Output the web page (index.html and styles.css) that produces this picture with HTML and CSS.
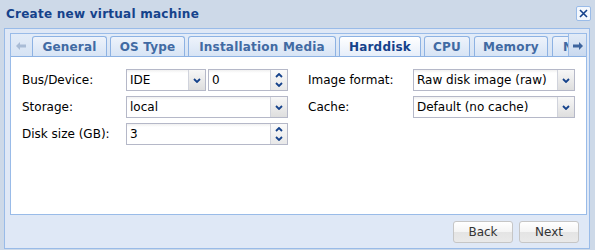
FILE: index.html
```html
<!DOCTYPE html>
<html>
<head>
<meta charset="utf-8">
<link rel="stylesheet" href="styles.css">
</head>
<body>
<div class="win">
  <div class="win-head">
    <span class="win-title">Create new virtual machine</span>
    <span class="win-close"><svg width="9" height="9" viewBox="0 0 9 9"><path d="M1 1L8 8M8 1L1 8" stroke="#15428b" stroke-width="1.6"/></svg></span>
  </div>
  <div class="win-body">
    <div class="tabpanel">
      <div class="tabstrip">
        <span class="scroller scroller-left"><svg width="10" height="8" viewBox="0 0 10 8"><path d="M0 4L4 0V2.5H10V5.5H4V8Z" fill="#a9bcd6"/></svg></span>
        <div class="tabs">
          <span class="tab t-general">General</span>
          <span class="tab t-os">OS Type</span>
          <span class="tab t-media">Installation Media</span>
          <span class="tab t-disk tab-active">Harddisk</span>
          <span class="tab t-cpu">CPU</span>
          <span class="tab t-mem">Memory</span>
          <span class="tab t-net">Network</span>
        </div>
        <span class="scroller scroller-right"><svg width="10" height="8" viewBox="0 0 10 8"><path d="M10 4L6 0V2.5H0V5.5H6V8Z" fill="#3d649e"/></svg></span>
      </div>
      <div class="tabbody">
        <div class="col">
          <div class="row">
            <span class="lbl">Bus/Device:</span>
            <div class="pair">
              <div class="field combo small"><span class="val">IDE</span><span class="trig"><svg width="8" height="5" viewBox="0 0 8 5"><path d="M1 1L4 4L7 1" stroke="#15428b" stroke-width="1.8" fill="none"/></svg></span></div>
              <div class="field spin small"><span class="val">0</span><span class="trig spintrig"><svg width="8" height="5" viewBox="0 0 8 5"><path d="M1 4L4 1L7 4" stroke="#15428b" stroke-width="1.8" fill="none"/></svg><svg width="8" height="5" viewBox="0 0 8 5"><path d="M1 1L4 4L7 1" stroke="#15428b" stroke-width="1.8" fill="none"/></svg></span></div>
            </div>
          </div>
          <div class="row">
            <span class="lbl">Storage:</span>
            <div class="field combo"><span class="val">local</span><span class="trig"><svg width="8" height="5" viewBox="0 0 8 5"><path d="M1 1L4 4L7 1" stroke="#15428b" stroke-width="1.8" fill="none"/></svg></span></div>
          </div>
          <div class="row">
            <span class="lbl">Disk size (GB):</span>
            <div class="field spin"><span class="val">3</span><span class="trig spintrig"><svg width="8" height="5" viewBox="0 0 8 5"><path d="M1 4L4 1L7 4" stroke="#15428b" stroke-width="1.8" fill="none"/></svg><svg width="8" height="5" viewBox="0 0 8 5"><path d="M1 1L4 4L7 1" stroke="#15428b" stroke-width="1.8" fill="none"/></svg></span></div>
          </div>
        </div>
        <div class="col col-right">
          <div class="row">
            <span class="lbl">Image format:</span>
            <div class="field combo"><span class="val">Raw disk image (raw)</span><span class="trig"><svg width="8" height="5" viewBox="0 0 8 5"><path d="M1 1L4 4L7 1" stroke="#15428b" stroke-width="1.8" fill="none"/></svg></span></div>
          </div>
          <div class="row">
            <span class="lbl">Cache:</span>
            <div class="field combo"><span class="val">Default (no cache)</span><span class="trig"><svg width="8" height="5" viewBox="0 0 8 5"><path d="M1 1L4 4L7 1" stroke="#15428b" stroke-width="1.8" fill="none"/></svg></span></div>
          </div>
        </div>
      </div>
    </div>
    <div class="footer">
      <span class="btn">Back</span>
      <span class="btn">Next</span>
    </div>
  </div>
</div>
</body>
</html>
```
FILE: styles.css
```css
* { box-sizing: border-box; }
html, body { margin: 0; padding: 0; }
body {
  width: 595px;
  height: 250px;
  overflow: hidden;
  background: #cdd9e8;
  font-family: "DejaVu Sans", sans-serif;
  font-size: 12px;
}
.win {
  width: 595px;
  height: 250px;
  display: flex;
  flex-direction: column;
  background: #cdd9e8;
}
.win-head {
  height: 28px;
  display: flex;
  align-items: center;
  justify-content: space-between;
  padding: 0 4px 0 6px;
}
.win-title {
  font-weight: bold;
  color: #15428b;
  font-size: 12px;
  letter-spacing: 0.25px;
  margin-top: 0;
}
.win-close {
  width: 15px;
  height: 15px;
  border: 1px solid #99bbe8;
  border-radius: 2px;
  background: #f4f8fd;
  display: flex;
  align-items: center;
  justify-content: center;
  margin-top: -2px;
}
.win-body {
  margin: 0 5px 1px 4px;
  height: 221px;
  border: 1px solid #99bbe8;
  background: #dfe8f6;
  display: flex;
  flex-direction: column;
  padding: 4px 2px 0 5px;
}
.tabpanel {
  height: 182px;
  border: 1px solid #99bbe8;
  background: #fff;
  display: flex;
  flex-direction: column;
}
.tabstrip {
  height: 23px;
  background: linear-gradient(#e3ecf8, #d6e3f4);
  border-bottom: 1px solid #8db2e3;
  display: flex;
  align-items: flex-end;
}
.scroller {
  width: 20px;
  height: 22px;
  display: flex;
  align-items: center;
  justify-content: center;
  flex: none;
}
.scroller-left { padding-top: 2px; }
.scroller-right {
  width: 18px;
  border-left: 1px solid #99bbe8;
  background: linear-gradient(#e2ebf7, #c9d9ef);
  padding-top: 1px;
}
.tabs {
  flex: 1;
  display: flex;
  gap: 3px;
  overflow: hidden;
  padding-left: 1px;
  height: 20px;
}
.tab {
  flex: none;
  height: 20px;
  border: 1px solid #8db2e3;
  border-bottom: none;
  border-radius: 3px 3px 0 0;
  padding: 1px 0 0 0;
  background: linear-gradient(#eef3fb, #d7e4f5);
  color: #416aa3;
  font-weight: bold;
  font-size: 12px;
  letter-spacing: 0.2px;
  display: flex;
  align-items: center;
  justify-content: center;
  white-space: nowrap;
  overflow: hidden;
}
.t-general { width: 75px; }
.t-os { width: 75px; }
.t-media { width: 148px; }
.t-disk { width: 82px; }
.t-cpu { width: 46px; margin-right: 1px; }
.t-mem { width: 74px; margin-right: 1px; }
.t-net { width: 80px; justify-content: flex-start; padding-left: 10px; }
.tab-active {
  background: linear-gradient(#ffffff, #e6eefa);
  color: #15428b;
}
.tabbody {
  flex: 1;
  display: flex;
  gap: 20px;
  padding: 12px 0 0 11px;
}
.col {
  display: flex;
  flex-direction: column;
  gap: 5px;
  width: 266px;
}
.col-right { width: 267px; }
.row {
  display: flex;
  align-items: center;
  height: 22px;
}
.lbl {
  width: 104px;
  flex: none;
  color: #000;
}
.col-right .lbl { width: 105px; }
.pair {
  display: flex;
  gap: 2px;
}
.field {
  width: 162px;
  height: 22px;
  border: 1px solid #b5b8c8;
  background: linear-gradient(#f0f0f0, #fff 3px);
  display: flex;
  align-items: center;
  justify-content: space-between;
}
.small { width: 80px; }
.val {
  padding-left: 3px;
  color: #000;
}
.trig {
  width: 17px;
  height: 20px;
  border-left: 1px solid #d0d3dc;
  background: linear-gradient(#f7f7f7, #dedede);
  display: flex;
  align-items: center;
  justify-content: center;
}
.spintrig {
  flex-direction: column;
  justify-content: space-around;
  background: linear-gradient(#fafafa, #e8e8e8);
  padding: 1px 0;
}
.footer {
  flex: 1;
  display: flex;
  justify-content: flex-end;
  align-items: flex-start;
  gap: 6px;
  padding: 6px 8px 0 0;
}
.btn {
  width: 60px;
  height: 22px;
  border: 1px solid #c6c6c6;
  border-radius: 3px;
  background: linear-gradient(#ffffff 0%, #f4f4f4 50%, #e4e4e4 51%, #e9e9e9 100%);
  color: #333;
  display: flex;
  align-items: center;
  justify-content: center;
}
```
